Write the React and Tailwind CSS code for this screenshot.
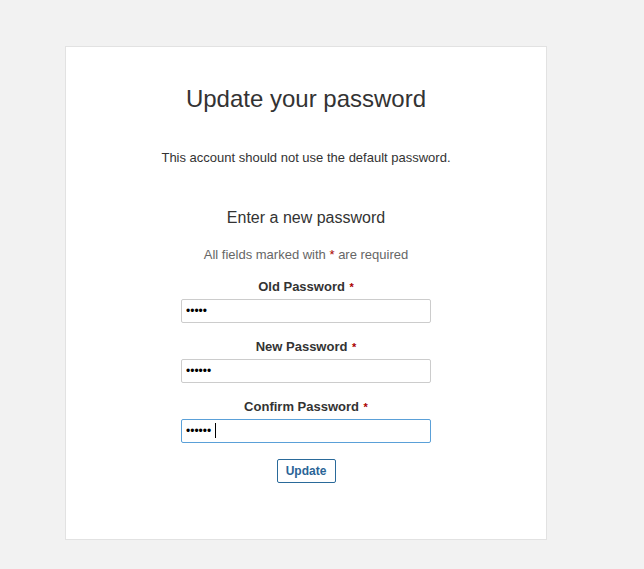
import React from "react";

function Field({ label, value, focused, mt }) {
  return (
    <div className={`flex flex-col items-center ${mt}`}>
      <label className="text-[13px] font-bold leading-[16px] text-[#333]">
        {label} <span className="ml-[1px] text-[#a00] text-[11px] align-top">*</span>
      </label>
      <div className="relative mt-[3px]">
        <input
          type="password"
          defaultValue={value}
          className={`h-[24px] w-[250px] rounded-[2px] border px-[4px] text-[12px] text-black outline-none ${
            focused ? "border-[#5aa0d8]" : "border-[#cccccc]"
          }`}
        />
        {focused && <div className="absolute left-[34px] top-[5px] h-[15px] w-[1px] bg-black" />}
      </div>
    </div>
  );
}

export default function App() {
  return (
    <div
      className="min-h-[569px] w-full bg-[#f2f2f2] pl-[65px] pt-[46px]"
      style={{ fontFamily: '"Liberation Sans", Arial, sans-serif' }}
    >
      <div className="flex h-[494px] w-[482px] flex-col items-center border border-[#e2e2e2] bg-white text-[#333]">
        <h1 className="mt-[37px] text-[24px] leading-[30px] text-[#333]">Update your password</h1>
        <p className="mt-[36px] text-[13px] leading-[16px]">This account should not use the default password.</p>
        <h2 className="mt-[42px] text-[16px] leading-[20px]">Enter a new password</h2>
        <p className="mt-[19px] text-[13px] leading-[16px] text-[#666]">
          All fields marked with <span className="text-[#a00]">*</span> are required
        </p>
        <Field label="Old Password" value="12345" mt="mt-[16px]" />
        <Field label="New Password" value="123456" mt="mt-[16px]" />
        <Field label="Confirm Password" value="123456" focused mt="mt-[16px]" />
        <button className="mt-[16px] h-[24px] w-[59px] rounded-[2px] border border-[#2a6a9a] bg-white text-[12px] font-bold text-[#2a6496]">
          Update
        </button>
      </div>
    </div>
  );
}
